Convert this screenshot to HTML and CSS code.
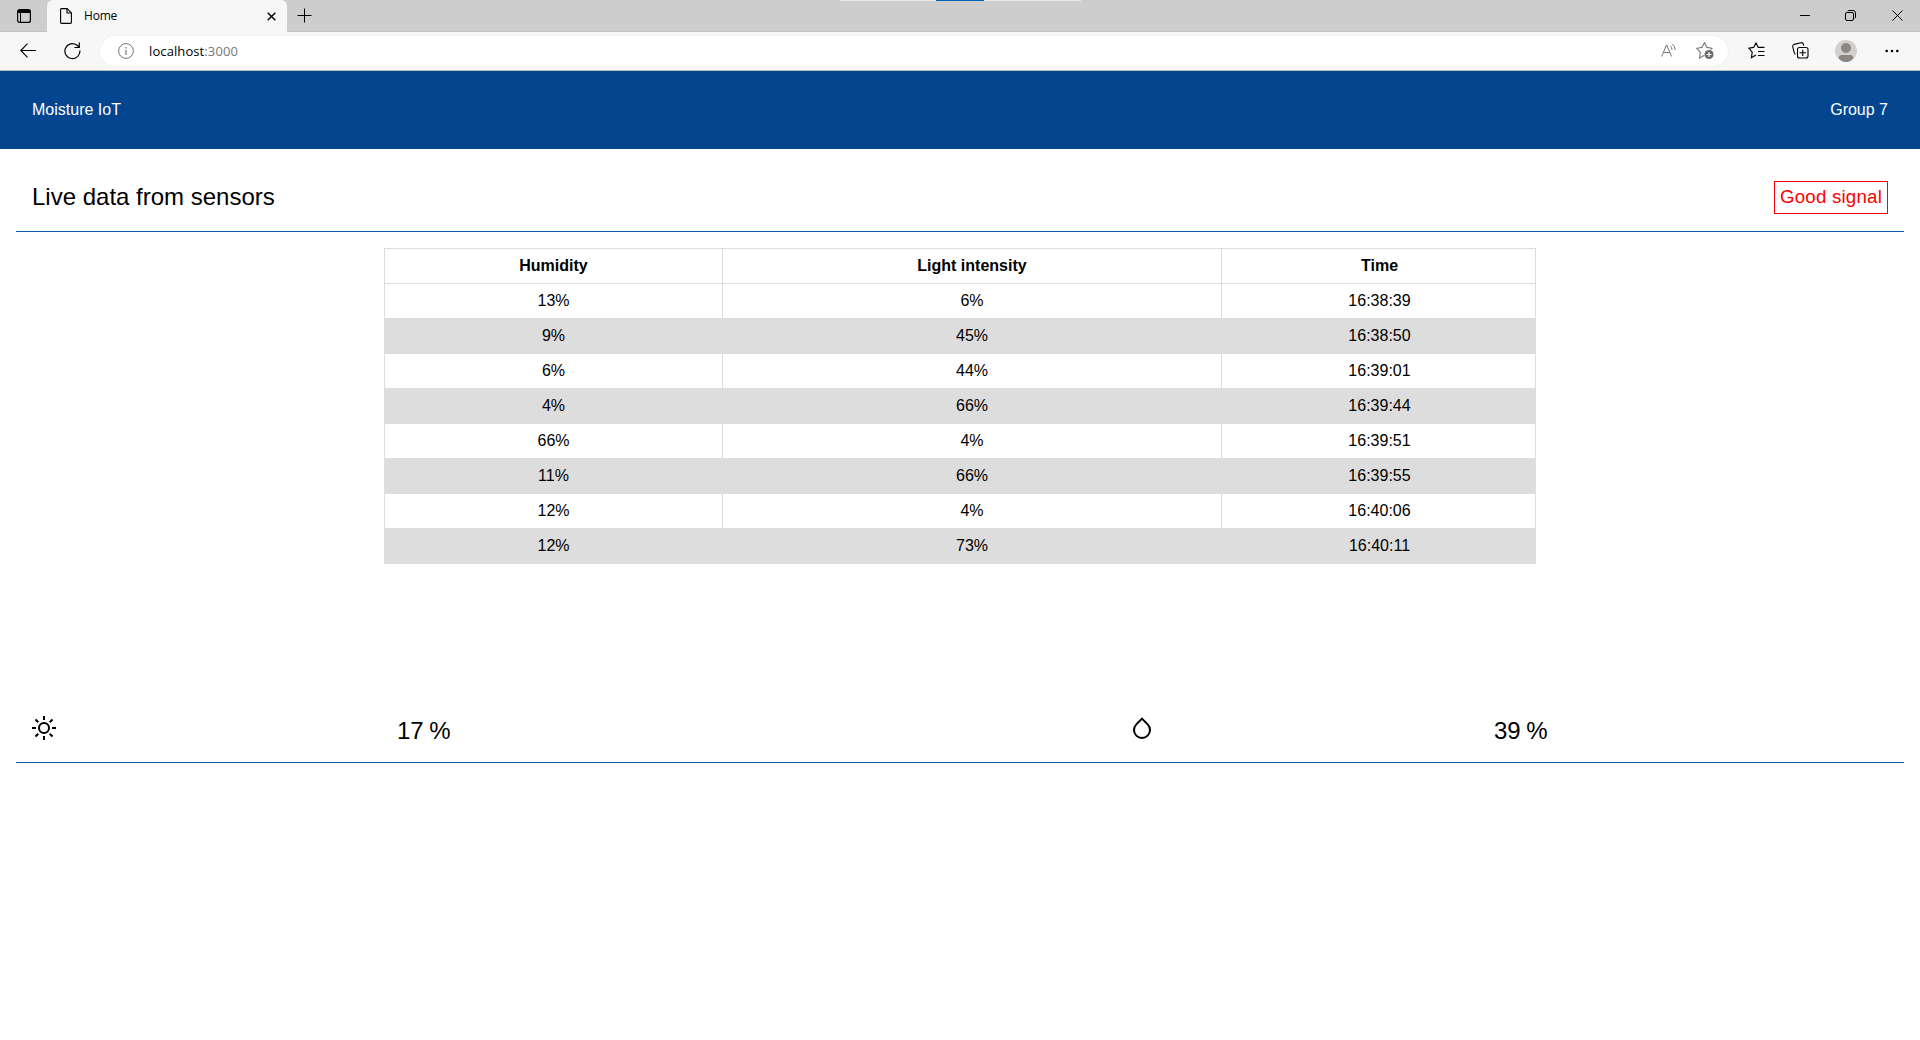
FILE: index.html
```html
<!DOCTYPE html>
<html lang="en">
<head>
<meta charset="utf-8">
<title>Home</title>
<link rel="stylesheet" href="styles.css">
</head>
<body>
<div class="tabbar">
  <svg class="tab-actions" width="14" height="14" viewBox="0 0 14 14"><rect x=".6" y=".6" width="12.8" height="12.8" rx="2" fill="none" stroke="#000" stroke-width="1.2"/><path d="M1 1h12v3H1z"/><path d="M3.500 4v9.500" stroke="#000"/></svg>
  <div class="tab">
    <svg width="12" height="16" viewBox="0 0 12 16" fill="none" stroke="#000" stroke-width="1.1"><path d="M.6 1.5q0-.9.9-.9h5.6l4.3 4.3v9.6q0 .9-.9.9h-9q-.9 0-.9-.9z"/><path d="M7 .8V5h4.2"/></svg>
    <span class="tab-title">Home</span>
    <svg width="9" height="9" viewBox="0 0 9 9" stroke="#000" stroke-width="1.4"><path d="M.7.7l7.6 7.6M8.3.7L.7 8.3"/></svg>
  </div>
  <svg class="new-tab" width="15" height="15" viewBox="0 0 15 15" stroke="#000"><path d="M7.5.5v14M.5 7.5h14"/></svg>
  <div class="grip"><span></span></div>
  <div class="window-controls">
    <svg width="10" height="11" viewBox="0 0 10 11" stroke="#000"><path d="M0 5.5h10"/></svg>
    <svg width="11" height="11" viewBox="0 0 11 11" fill="none" stroke="#000"><rect x=".5" y="2.5" width="8" height="8" rx="1.5"/><path d="M2.7 1q.4-.5 1.3-.5h4q2.500 0 2.500 2.500v4q0 .9-.6 1.300"/></svg>
    <svg width="11" height="11" viewBox="0 0 11 11" stroke="#000"><path d="M.5.5l10 10M10.500.5l-10 10"/></svg>
  </div>
</div>
<div class="toolbar">
  <svg class="back" width="16" height="15" viewBox="0 0 16 15" fill="none" stroke="#000" stroke-width="1.1"><path d="M16 7.500H.8M7.500.7L.8 7.500l6.700 6.800"/></svg>
  <svg class="reload" width="17" height="18" viewBox="0 0 17 18" fill="none" stroke="#000" stroke-width="1.2"><path d="M15.900 8.500A7.500 7.500 0 1 1 12.800 3l2.400 2.200M15.300.6v4.900h-4.900"/></svg>
  <div class="address">
    <svg width="16" height="16" viewBox="0 0 16 16" fill="none" stroke="#767676"><circle cx="8" cy="8" r="7.400"/><path d="M8 7v5M8 4v1.400" stroke-width="1.200"/></svg>
    <span class="url">localhost<span class="port">:3000</span></span>
    <svg class="read" width="16" height="15" viewBox="0 0 16 15" fill="none" stroke="#767676"><path d="M.6 13.500L5.500 2h.2l4.900 11.500M2.300 9.500h6.600M9.300 3q1.700 1.200 1.700 3.700M11.200.8q3 1.900 3 6.200"/></svg>
    <svg class="favorite" width="18" height="17" viewBox="0 0 18 17"><path d="M8 13.400l-4.500 2.500.8-5.700L.8 6.300l5.100-.9L8.500.7l2.400 4.700 5.100.9-1.300 1.400" fill="none" stroke="#767676" stroke-width="1.100"/><circle cx="13" cy="12.500" r="4.500" fill="#6b6b6b"/><path d="M13 10v5M10.500 12.500h5" stroke="#fff" stroke-width="1.200"/></svg>
  </div>
  <svg class="favorites" width="17" height="17" viewBox="0 0 17 17" fill="none" stroke="#000" stroke-width="1.100"><path d="M8 13l-4.600 2.800.8-5.700L.8 6.200l4.800-.8L8 .9l2.200 4.500h6.300M10 9.500h6.500M10 13.500h6.500"/></svg>
  <svg class="collections" width="17" height="17" viewBox="0 0 17 17" fill="none" stroke="#000" stroke-width="1.100"><path d="M3.600 12.200q-1-.3-1.300-1.300L.7 4.700Q.4 3 2 2.400L9 .7q1.800-.3 2.300 1.300l.5 1.600"/><rect x="5.500" y="5.500" width="10.500" height="10.500" rx="2"/><path d="M10.700 7.700v6.200M7.600 10.800h6.300"/></svg>
  <svg class="profile" width="22" height="22" viewBox="0 0 22 22"><circle cx="11" cy="11" r="11" fill="#d2d0cd"/><circle cx="11" cy="8" r="5" fill="#8b8682"/><path d="M3.700 18q0-3 3-3h8.600q3 0 3 3Q15.500 22 11 22t-7.300-4z" fill="#8b8682"/></svg>
  <svg class="more" width="14" height="4" viewBox="0 0 14 4"><circle cx="1.700" cy="2" r="1.300"/><circle cx="7" cy="2" r="1.300"/><circle cx="12.300" cy="2" r="1.300"/></svg>
</div>
<header class="site-header"><span>Moisture IoT</span><span>Group 7</span></header>
<main>
  <section class="heading">
    <h2>Live data from sensors</h2>
    <div class="signal">Good signal</div>
  </section>
  <div class="table-area">
    <table>
      <colgroup><col class="col-humidity"><col class="col-light"><col class="col-time"></colgroup>
      <tr><th>Humidity</th><th>Light intensity</th><th>Time</th></tr>
      <tr><td>13%</td><td>6%</td><td>16:38:39</td></tr>
      <tr><td>9%</td><td>45%</td><td>16:38:50</td></tr>
      <tr><td>6%</td><td>44%</td><td>16:39:01</td></tr>
      <tr><td>4%</td><td>66%</td><td>16:39:44</td></tr>
      <tr><td>66%</td><td>4%</td><td>16:39:51</td></tr>
      <tr><td>11%</td><td>66%</td><td>16:39:55</td></tr>
      <tr><td>12%</td><td>4%</td><td>16:40:06</td></tr>
      <tr><td>12%</td><td>73%</td><td>16:40:11</td></tr>
    </table>
  </div>
  <section class="readings">
    <svg width="24" height="24" viewBox="0 0 24 24" fill="none" stroke="#000" stroke-width="2"><circle cx="12" cy="12" r="5"/><path d="M12 0v4M12 20v4M0 12h4M20 12h4M3.500 3.500l2.800 2.800M17.700 17.700l2.800 2.800M3.500 20.500l2.800-2.800M17.700 6.300l2.800-2.800"/></svg>
    <span class="value">17 %</span>
    <svg class="drop" width="24" height="24" viewBox="0 0 24 24"><path d="M12 3.100L7.050 8.050a7 7 0 1 0 9.900 0L12 3.100zm0-2.828l6.364 6.364a9 9 0 1 1-12.728 0L12 .272z"/></svg>
    <span class="value">39 %</span>
  </section>
</main>
</body>
</html>
```
FILE: styles.css
```css
* { box-sizing: border-box; }
body { margin: 0; background: #fff; color: #000; font: 16px/18px "Liberation Sans", Arial, sans-serif; }
svg { display: block; flex: none; }

.tabbar { display: flex; align-items: center; height: 32px; background: #cdcdcd; position: relative; border-bottom: 1px solid #c2c2c2; }
.tab-actions { margin: 0 16px 0 17px; }
.tab { display: flex; align-items: center; width: 240px; height: 32px; padding: 0 11px 0 13px; background: #f7f7f7; border-radius: 6px 6px 0 0; align-self: flex-start; font: 12px/16px "Open Sans", sans-serif; }
.tab-title { flex: 1; margin-left: 12px; letter-spacing: -.2px; }
.new-tab { margin-left: 10px; }
.grip { position: absolute; left: 840px; top: 0; width: 241px; height: 1px; background: #e9e9e9; }
.grip span { display: block; width: 48px; height: 1px; margin-left: 96px; background: #0063b1; }
.window-controls { display: flex; gap: 36px; margin-left: auto; padding-right: 17px; }
.window-controls svg:first-child { margin-right: -1px; }

.toolbar { display: flex; align-items: center; height: 39px; padding-bottom: 1px; background: #f7f7f7; border-bottom: 1px solid #b9b9b9; }
.back { margin-left: 20px; }
.reload { margin-left: 28px; }
.address { display: flex; align-items: center; width: 1628px; height: 30px; margin-left: 19px; padding: 0 14px 0 18px; background: #fff; border-radius: 15px; box-shadow: 0 0 2px #e4e4e4; }
.url { margin-left: 15px; font: 13px/18px "Open Sans", sans-serif; letter-spacing: .1px; }
.port { color: #767676; }
.read { margin-left: auto; }
.favorite { margin-left: 19px; }
.favorites { margin-left: 20px; }
.collections { margin-left: 27px; }
.profile { margin-left: 26px; }
.more { margin-left: 28px; }

.site-header { display: flex; justify-content: space-between; align-items: center; height: 78px; padding: 0 32px; background: #03458f; color: #fff; }
.heading { display: flex; justify-content: space-between; align-items: flex-start; height: 83px; margin: 0 16px; padding: 32px 16px 0; border-bottom: 1px solid #0b5ca9; }
h2 { margin: 2px 0 0; font-size: 24px; line-height: 28px; font-weight: 400; }
.signal { width: 114px; height: 33px; padding: 4px 5px; border: 1px solid #f00; color: #f00; font-size: 18.72px; line-height: 21px; letter-spacing: .2px; white-space: nowrap; }
.table-area { height: 468px; padding: 16px 384px 0; }
table { width: 1152px; border-collapse: collapse; table-layout: fixed; text-align: center; }
.col-humidity { width: 338px; }
.col-light { width: 499px; }
.col-time { width: 314px; }
th, td { height: 35px; padding: 8px; border: 1px solid #ddd; line-height: 18px; }
td:last-child, th:last-child { padding-left: 9px; padding-right: 7px; }
tr:nth-child(odd):not(:first-child) { background: #ddd; }
.readings { display: grid; grid-template-columns: 365px 733px 364px 1fr; align-items: start; height: 63px; margin: 0 16px; padding: 16px 16px 0; border-bottom: 1px solid #0b5ca9; }
.value { font-size: 24px; line-height: 28px; margin-top: 1px; word-spacing: -1px; }
.drop { margin-top: 1px; }
```
